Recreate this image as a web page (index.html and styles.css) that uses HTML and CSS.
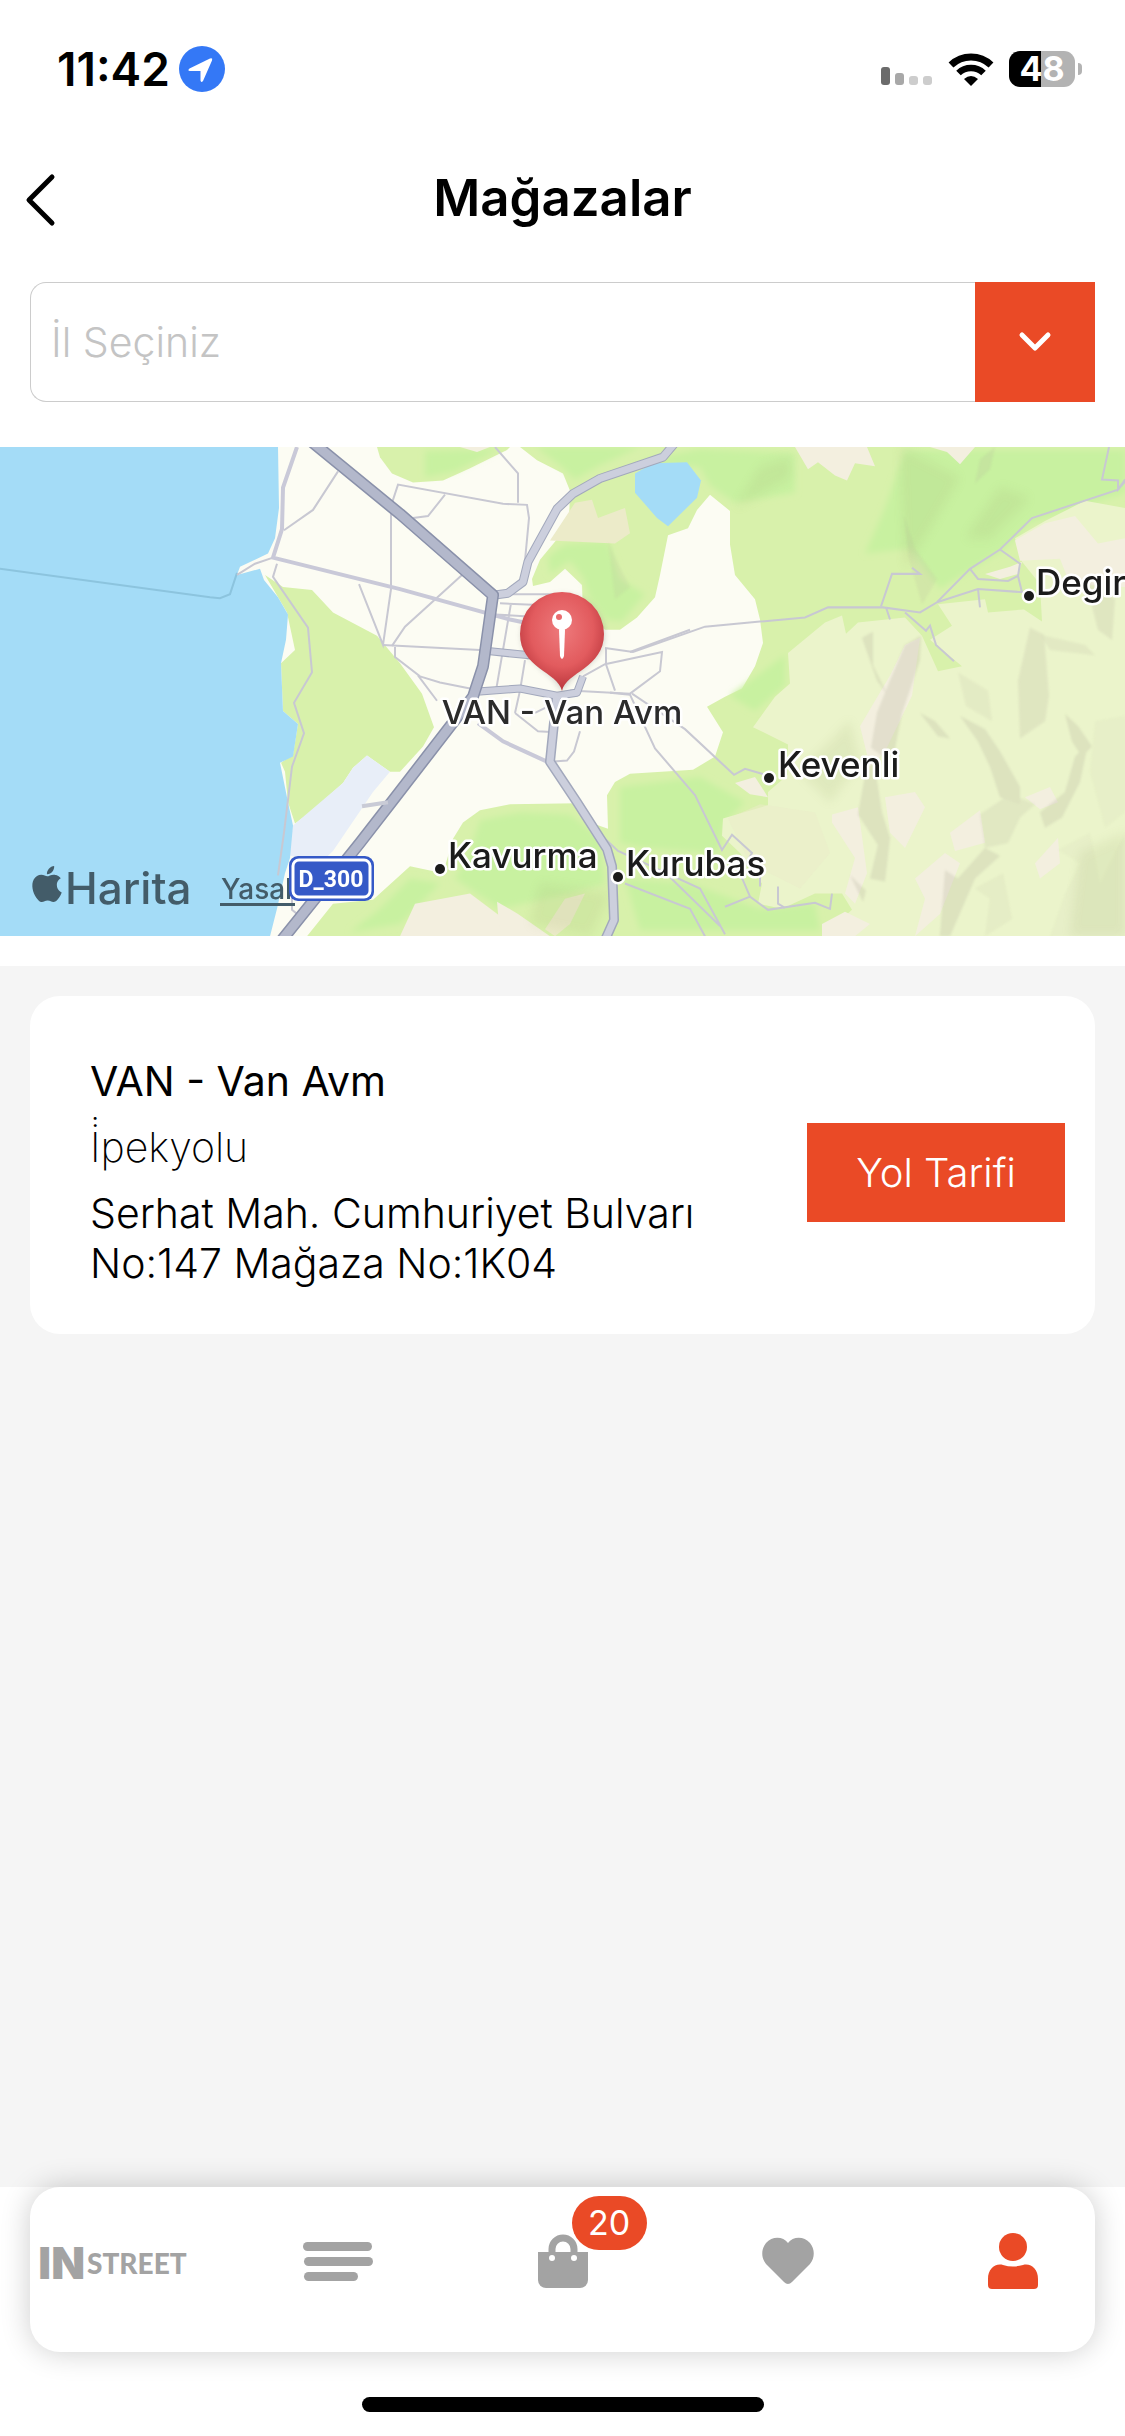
FILE: index.html
```
<!DOCTYPE html>
<html lang="tr">
<head>
    <meta charset="utf-8">
    <meta name="viewport" content="width=device-width, initial-scale=1">
    <title>Mağazalar</title>
    <link rel="stylesheet" href="styles.css">
</head>
<body>
<!-- Status bar -->
<div class="status-bar">
    <div class="status-left">
        <span class="time">11:42</span>
        <svg class="location" width="46" height="46" viewBox="0 0 46 46">
            <circle cx="23" cy="23" r="23" fill="#3478f6"/>
            <path d="M10.500 22.500 31 12.500q3-1 2 2L24 35q-2 2-2.500-.500V25H11q-3-.500-.500-2.500z" fill="#fff"/>
        </svg>
    </div>
    <div class="status-right">
        <svg width="52" height="36" viewBox="0 0 52 36">
            <rect x="0" y="16" width="9" height="18" rx="3" fill="#6b6b6b"/>
            <rect x="14" y="22" width="9" height="12" rx="3" fill="#a8a8a8"/>
            <rect x="28" y="25" width="9" height="9" rx="3" fill="#cdcdcd"/>
            <rect x="42" y="25" width="9" height="9" rx="3" fill="#cdcdcd"/>
        </svg>
        <svg width="46" height="36" viewBox="0 0 46 36">
            <path d="M3 14a29 29 0 0 1 40 0" fill="none" stroke="#000" stroke-width="7"/>
            <path d="M10.500 22a18 18 0 0 1 25 0" fill="none" stroke="#000" stroke-width="6.500"/>
            <path d="M16 28q7-6 14 0l-7 7z"/>
        </svg>
        <div class="battery">48</div>
    </div>
</div>

<header class="header">
    <button class="back" aria-label="Geri">
        <svg width="32" height="54" viewBox="0 0 32 54"><path d="M28 4 5 27l23 23" fill="none" stroke="#000" stroke-width="5" stroke-linecap="round" stroke-linejoin="round"/></svg>
    </button>
    <h1>Mağazalar</h1>
</header>

<form class="city-form">
    <input type="text" class="city-input" placeholder="İl Seçiniz" aria-label="İl Seçiniz">
    <button type="button" class="city-toggle" aria-label="İlleri göster">
        <svg width="36" height="24" viewBox="0 0 36 24"><path d="M5 5l13 13L31 5" fill="none" stroke="#fff" stroke-width="5" stroke-linecap="round" stroke-linejoin="round"/></svg>
    </button>
</form>

<!-- Map -->
<svg class="map" viewBox="0 0 1125 489" preserveAspectRatio="xMidYMid slice">
    <defs>
        <radialGradient id="pinFill" cx="50%" cy="38%" r="62%">
            <stop offset="0" stop-color="#ee7a7c"/>
            <stop offset="0.600" stop-color="#e25b5e"/>
            <stop offset="1" stop-color="#b8333a"/>
        </radialGradient>
        <filter id="soft"><feGaussianBlur stdDeviation="3"/></filter>
        <filter id="shade"><feGaussianBlur stdDeviation="5"/></filter>
        <filter id="relief"><feGaussianBlur stdDeviation="1"/></filter>
    </defs>
    <rect width="1125" height="489" fill="#fcfcf3"/>

    <g transform="scale(1 1.015)">
    <!-- green areas -->
    <g fill="#d8f1ab">
        <path d="M377 0 380 10 392 26 413 35 443 33 470 21 507 3 510 0z"/>
        <path d="M520 0 537 13 563 26 570 43 569 73 557 91 540 111 532 130 533 137 550 133 565 120 582 136 583 163 605 180 620 180 637 168 655 148 660 126 668 87 688 80 697 62 710 47 730 63 730 96 735 126 755 150 760 170 763 193 755 216 742 238 725 246 707 256 723 281 715 305 693 318 630 322 615 330 607 343 608 376 593 371 577 351 510 352 480 358 463 370 453 386 443 420 410 413 373 446 333 450 307 482H1125V0z"/>
        <path d="M265 126 283 138 312 141 333 163 377 186 400 213 422 243 434 276 423 295 400 320 390 320 367 304 353 316 343 331 310 360 295 371 288 350 285 320 281 311 293 303 298 273 283 260 281 213 295 200 287 163z"/>
    </g>
    <g fill="#c8f1a0" filter="url(#soft)">
        <path d="M425 4 500 2 455 24 425 30z"/>
        <path d="M536 0H640L600 18 575 32 560 18z"/>
        <path d="M548 108 565 96 608 92 620 130 645 145 622 172 606 170 590 150 583 128 570 112 550 125z"/>
        <path d="M640 14 700 2 795 6V45L735 55 710 38 700 20z"/>
        <path d="M905 3 1125 3V45L1030 75 1005 100 940 140 910 100 865 105 885 60z"/>
        <path d="M480 368 520 360 570 362 600 385 605 430 570 440 500 455 455 425 470 400z"/>
        <path d="M620 335 700 325 745 350 725 370 718 400 645 395 620 390z"/>
        <path d="M380 455 410 425 440 430 400 470 350 478z"/>
        <path d="M625 425 690 430 760 455 815 450 820 476 640 476z"/>
        <path d="M730 245 785 205 785 235 755 260z"/>
    </g>

    <!-- hills -->
    <path fill="#ebf4cb" d="M825 173 842 166 846 184 858 173 905 168 922 186 938 221 962 216 930 190 952 176 938 155 985 150 988 163 1024 160 1042 172 1040 135 1022 113 1015 90 1045 73 1085 53 1125 60V482H822L852 456 842 440 815 440 782 455 758 450 762 430 740 400 722 383 723 366 768 353 768 340 788 323 788 293 753 276 775 246 790 233 788 203z"/>
    <g fill="#f3efdf">
        <path d="M795 0H867L875 19 855 16 847 33 835 28 818 15 808 22z"/>
        <path d="M930 0H975L960 17 947 5z"/>
        <path d="M460 0H490L477 5z"/>
        <path d="M1015 92 1045 75 1075 68 1098 95 1125 90V138L1070 135 1060 110 1020 112z"/>
        <path d="M985 125 1010 118 1022 113 1018 125 1000 130z"/>
        <path d="M735 331 755 325 768 345 750 342z"/>
        <path d="M415 450 470 440 500 462 515 482H400z"/>
        <path d="M497 448 518 460 550 482H500z"/>
        <path d="M822 470 845 458 870 470 855 482H822z"/>
        <path d="M832 362 858 355 867 420 855 450 845 440 855 405 832 370z"/>
        <path d="M885 345 915 340 925 355 905 395 890 380z"/>
        <path d="M950 380 980 358 985 390 955 398z"/>
        <path d="M1025 345 1050 335 1058 350 1040 357z"/>
        <path d="M1035 410 1058 385 1060 410 1040 425z"/>
        <path d="M915 425 945 400 960 410 940 460 915 482 925 445z"/>
        <path d="M860 275 890 225 905 195 920 188 912 245 885 300 870 315z"/>
    </g>
    <g fill="#ecebc9">
        <path d="M550 92 575 55 592 52 598 70 625 60 630 85 615 95z"/>
        <path d="M545 475 565 445 585 440 570 470 555 482z"/>
        <path d="M728 366 760 352 815 360 830 400 800 435 750 410z" opacity=".5"/>
    </g>

    <!-- relief shading -->
    <g fill="#b5b29c" opacity=".26" filter="url(#relief)">
        <path d="M862 188 873 182 873 215 888 245 877 230z"/>
        <path d="M905 195 921 186 920 210 902 262 892 312 871 296 877 262 890 230z"/>
        <path d="M866 318 874 310 882 360 890 385 885 428 870 425 878 392 858 362z"/>
        <path d="M904 68 915 100 937 130 922 155 909 110z" opacity=".6"/>
        <path d="M975 36 990 22 995 0 980 12z" opacity=".7"/>
        <path d="M1030 178 1044 185 1049 245 1045 270 1020 287 1018 230z" opacity=".8"/>
        <path d="M920 262 935 270 950 287 938 285z"/>
        <path d="M958 222 988 240 992 270 966 255z" opacity=".5"/>
        <path d="M960 265 985 278 1000 300 1020 335 1020 352 1000 345 990 315 978 290z"/>
        <path d="M980 362 1010 342 1035 352 1020 365 1008 390 985 395z" opacity=".7"/>
        <path d="M1040 360 1065 340 1075 305 1088 292 1080 330 1062 365 1045 375z"/>
        <path d="M1065 263 1078 275 1092 295 1082 305 1072 290z"/>
        <path d="M945 417 958 425 985 395 1000 403 975 425 950 482H940z"/>
        <path d="M975 435 1003 420 1012 465 985 482 990 445z" opacity=".4"/>
        <path d="M1085 130 1115 150 1112 190 1098 180z" opacity=".8"/>
        <path d="M1040 185 1085 195 1095 205 1050 200z" opacity=".6"/>
        <path d="M1058 397 1080 410 1065 440 1050 482H1125V380L1100 430 1090 380z" opacity=".25"/>
        <path d="M1095 270 1125 265V360L1105 375 1090 320z" opacity=".25"/>
        <path d="M850 422 866 437 863 448z"/>
        <path d="M608 93 618 115 630 138 615 150z" opacity=".5"/>
    </g>
    <g fill="#9fae70" opacity=".14" filter="url(#shade)">
        <path d="M900 0 960 30 930 80 905 120z"/>
        <path d="M965 90 1000 40 1030 50 990 90z"/>
        <path d="M735 60 790 30 790 10 760 20z"/>
        <path d="M800 320 850 270 860 310 830 350z"/>
        <path d="M1080 400 1125 380V482H1070z"/>
        <path d="M540 430 610 440 590 482 530 470z"/>
    </g>

    <!-- lake and water -->
    <path fill="#e8eef8" d="M367 304 390 320 373 340 333 398 320 410 288 402 293 373 343 331 353 316z"/>
    <path fill="#a4dcf7" d="M0 0H278L279 60 275 90 268 105 240 118 237 126 260 120 264 131 278 148 288 165 286 190 281 213 283 260 298 273 293 305 280 311 288 350 293 373 290 405 285 420 277 455 270 482H0z"/>
    <path fill="#a4dcf7" d="M635 26 653 16 687 15 701 33 697 50 668 78 657 70 635 45z"/>
    <path d="M0 120 210 148 220 149 230 145 237 124" fill="none" stroke="#8cc4de" stroke-width="2"/>

    <!-- small roads -->
    <g fill="none" stroke="#c8c8d2" stroke-width="2">
        <path d="M237 126 255 115 273 109"/>
        <path d="M284 82 313 62 338 24"/>
        <path d="M277 115 273 128 308 178 312 222 294 252 304 282 292 315 284 380 278 422"/>
        <path d="M292 440V456L297 460"/>
        <path d="M359 135 383 195 391 140V58L398 37 503 56 527 57 529 70 525 112"/>
        <path d="M495 0 518 26V55M445 47 428 68 413 70M462 126 405 177 392 196"/>
        <path d="M383 195 480 200M395 197V207L420 226 440 232 480 240M418 225 437 250"/>
        <path d="M500 145 565 145M500 154 545 156M495 165 545 168M511 154 496 240M525 210 520 240 515 262"/>
        <path d="M605 198 633 202 705 177 760 172 805 168 828 158 883 158 920 163 937 153 970 120 1000 101 1032 70 1118 42 1125 32"/>
        <path d="M583 226 605 214 662 202 660 221 630 243 570 240M630 202 690 180M606 198V214L615 240"/>
        <path d="M610 242 630 244 655 297 695 343 722 397 732 382 752 400 745 412"/>
        <path d="M632 243 685 278 734 323 745 317 769 324"/>
        <path d="M550 310 567 309 574 300 580 280M515 262 538 280 555 281M535 262 570 245"/>
        <path d="M604 385 618 398 700 435 725 480M625 430 690 455 705 482M668 422 720 472"/>
        <path d="M725 453 750 443 768 456 815 449 830 455 832 440M750 443 740 420 760 415 760 433M778 433V450L785 454"/>
        <path d="M881 157 892 125H920L912 119M886 158 890 170M905 163 926 181 930 176 936 195 954 211"/>
        <path d="M970 120 978 130 1008 132 1018 127 1022 143 978 140 937 153M1000 101 1020 115 1018 127M978 140 980 158"/>
        <path d="M1109 0 1102 32 1118 33V42L1125 34"/>
    </g>

    <!-- main roads -->
    <g fill="none" stroke="#c9c9d8" stroke-width="4">
        <path d="M297 0 283 40 282 81 273 109 400 140 510 170 540 176"/>
        <path d="M478 272 503 290 547 310"/>
    </g>
    <g fill="none" stroke-linejoin="round">
        <g stroke="#a2a8bc" stroke-width="9">
            <path d="M493 146 508 144 523 133 528 113 557 61 573 46 600 31 663 10 675-4"/>
            <path d="M557 243 550 310 577 350 607 396 612 413 614 466 604 488" stroke-width="10"/>
            <path d="M477 241 520 238 557 245 577 242 583 226M488 201 527 205 545 206" stroke-width="8"/>
        </g>
        <g stroke="#cccfdd" stroke-width="7">
            <path d="M493 146 508 144 523 133 528 113 557 61 573 46 600 31 663 10 675-4"/>
            <path d="M557 243 550 310 577 350 607 396 612 413 614 466 604 488"/>
            <path d="M477 241 520 238 557 245 577 242 583 226M488 201 527 205 545 206" stroke-width="6"/>
        </g>
        <path d="M312-5 400 66 493 146 483 216 473 246 393 348 360 390 280 488" stroke="#8a91aa" stroke-width="12"/>
        <path d="M312-5 400 66 493 146 483 216 473 246 393 348 360 390 280 488" stroke="#b3b8cb" stroke-width="9"/>
        <path d="M362 354 388 350" stroke="#c9cbd6" stroke-width="4"/>
    </g>
    </g>

    <!-- map credits -->
    <g fill="#435c69">
        <path transform="translate(29 419) scale(1.500)" d="M12.152 6.896c-.948 0-2.415-1.078-3.960-1.040-2.040.027-3.910 1.183-4.961 3.014-2.117 3.675-.546 9.103 1.519 12.090 1.013 1.454 2.208 3.090 3.792 3.039 1.520-.065 2.090-.987 3.935-.987 1.831 0 2.350.987 3.960.948 1.637-.026 2.676-1.480 3.676-2.948 1.156-1.688 1.636-3.325 1.662-3.415-.039-.013-3.182-1.221-3.220-4.857-.026-3.040 2.480-4.494 2.597-4.559-1.429-2.090-3.623-2.324-4.390-2.376-2-.156-3.675 1.090-4.610 1.090zM15.530 3.830c.843-1.012 1.400-2.427 1.245-3.830-1.207.052-2.662.805-3.532 1.818-.780.896-1.454 2.338-1.273 3.714 1.338.104 2.715-.688 3.559-1.701"/>
        <text x="65" y="457" class="map-brand">Harita</text>
        <text x="221" y="452" class="map-legal">Yasal</text>
        <rect x="220" y="456" width="75" height="3"/>
    </g>
    <rect x="289" y="409" width="85" height="45" rx="9" fill="#3559c7"/>
    <rect x="293" y="413" width="77" height="37" rx="6" fill="#3559c7" stroke="#fff" stroke-width="3"/>
    <text x="331" y="440" class="road-no" text-anchor="middle">D_300</text>

    <!-- towns -->
    <g class="town">
        <circle cx="440" cy="422" r="5"/><text x="448" y="421">Kavurma</text>
        <circle cx="618" cy="430" r="5"/><text x="626" y="429">Kurubas</text>
        <circle cx="769" cy="331" r="5"/><text x="778" y="330">Kevenli</text>
        <circle cx="1029" cy="149" r="5"/><text x="1036" y="148">Degir</text>
    </g>

    <!-- store pin -->
    <g transform="translate(0 3)">
        <path d="M562 243C558 222 522 214 522 186a40 40 0 0 1 82 0C604 214 568 222 562 243z" fill="#6b6b6b" opacity=".35" filter="url(#soft)"/>
        <path d="M562 241C558 222 520 218 520 184a42 42 0 0 1 84 0C604 218 566 222 562 241z" fill="url(#pinFill)"/>
        <path d="M560 176h4l1 4-1 26q-2 6-4 0l-1-26z" fill="#fff"/>
        <circle cx="562" cy="170" r="10" fill="#fff"/>
        <circle cx="559" cy="167" r="3" fill="#e96a6d"/>
    </g>
    <text x="562" y="277" class="pin-label" text-anchor="middle">VAN - Van Avm</text>
</svg>

<main class="stores">
    <article class="store-card">
        <div class="store-info">
            <h2>VAN - Van Avm</h2>
            <p class="district">İ&#x307;pekyolu</p>
            <p class="address">Serhat Mah. Cumhuriyet Bulvarı No:147 Mağaza No:1K04</p>
        </div>
        <button class="directions">Yol Tarifi</button>
    </article>
</main>

<footer class="footer">
    <div class="tab-bar">
        <nav class="tabs">
            <a href="#" class="tab logo"><span class="logo-in">IN</span><span class="logo-street">STREET</span></a>
            <a href="#" class="tab" aria-label="Kategoriler">
                <svg width="70" height="56" viewBox="0 0 70 56">
                    <rect x="0" y="9" width="69" height="9" rx="4.500"/>
                    <rect x="1" y="24" width="69" height="9" rx="4.500"/>
                    <rect x="1" y="39" width="54" height="9" rx="4.500"/>
                </svg>
            </a>
            <a href="#" class="tab" aria-label="Sepet">
                <svg width="50" height="56" viewBox="0 0 50 56">
                    <path d="M0 19H50V47a8 8 0 0 1-8 8H8a8 8 0 0 1-8-8z"/>
                    <path d="M14 24V16a11 11 0 0 1 22 0v8" fill="none" stroke="#a3a3a3" stroke-width="7"/>
                    <circle cx="14" cy="25" r="3" fill="#fff"/>
                    <circle cx="36" cy="25" r="3" fill="#fff"/>
                </svg>
                <span class="badge">20</span>
            </a>
            <a href="#" class="tab" aria-label="Favoriler">
                <svg width="52" height="56" viewBox="0 0 52 56"><path d="M26 10C31 3 42 3 48 10c5 6 5 15 0 21L30 49q-4 4-8 0L4 31C-1 25-1 16 4 10 10 3 21 3 26 10z"/></svg>
            </a>
            <a href="#" class="tab active" aria-label="Hesabım">
                <svg width="50" height="56" viewBox="0 0 50 56">
                    <circle cx="25" cy="14" r="14"/>
                    <path d="M0 46C0 36 7 30 15 32q10 3 20 0c8-2 15 4 15 14v6q0 4-4 4H4q-4 0-4-4z"/>
                </svg>
            </a>
        </nav>
    </div>
    <div class="home-indicator"></div>
</footer>
</body>
</html>
```
FILE: styles.css
```
* {
    box-sizing: border-box;
}
body {
    margin: 0;
    min-height: 100vh;
    display: flex;
    flex-direction: column;
    background: #fff;
    color: #000;
    font-family: Inter, "Liberation Sans", sans-serif;
}
h1, h2, p {
    margin: 0;
}
button {
    border: 0;
    padding: 0;
    font-family: inherit;
    cursor: pointer;
}
svg {
    display: block;
}
.status-bar {
    display: flex;
    justify-content: space-between;
    align-items: center;
    height: 138px;
    padding: 0 43px 0 57px;
}
.status-left {
    display: flex;
    align-items: center;
    gap: 9px;
}
.status-right {
    display: flex;
    align-items: center;
    gap: 15px;
}
.time {
    font-size: 46px;
    font-weight: 600;
}
.battery {
    position: relative;
    width: 66px;
    height: 36px;
    margin-right: 7px;
    border-radius: 11px;
    background: linear-gradient(to right, #000 48%, #b3b3b3 48%);
    color: #fff;
    font-size: 34px;
    font-weight: 700;
    line-height: 36px;
    text-align: center;
}
.battery::after {
    content: "";
    position: absolute;
    right: -7px;
    top: 12px;
    width: 4px;
    height: 12px;
    border-radius: 0 4px 4px 0;
    background: #b3b3b3;
}
.header {
    display: grid;
    grid-template-columns: 80px 1fr 80px;
    align-items: center;
    height: 124px;
    margin-bottom: 20px;
}
.header h1 {
    padding-bottom: 6px;
    font-size: 51px;
    font-weight: 600;
    text-align: center;
}
.back {
    justify-self: start;
    margin-left: 24px;
    background: none;
}
.city-form {
    display: flex;
    height: 120px;
    margin: 0 30px 45px;
}
.city-input {
    flex: 1;
    min-width: 0;
    padding: 0 20px;
    border: 1px solid #ccc;
    border-right: 0;
    border-radius: 16px 0 0 16px;
    font-family: inherit;
    font-size: 41px;
    font-weight: 300;
}
.city-input::placeholder {
    color: #c4c4c4;
    opacity: 1;
}
.city-toggle {
    display: flex;
    align-items: center;
    justify-content: center;
    width: 120px;
    background: #ea4a26;
}

/* Map */
.map {
    width: 100%;
    height: 489px;
    flex-shrink: 0;
}
.map-brand {
    font-size: 44px;
    font-weight: 500;
}
.map-legal {
    font-size: 28px;
    font-weight: 500;
}
.road-no {
    fill: #fff;
    font-family: Roboto, sans-serif;
    font-size: 23px;
    font-weight: 700;
}
.town, .pin-label {
    fill: #1b1b1b;
    stroke: #fff;
    stroke-width: 5px;
    stroke-linejoin: round;
    paint-order: stroke;
    font-size: 35px;
    font-weight: 500;
}
.pin-label {
    fill: #2b2b2b;
    font-size: 33px;
}

/* Store list */
.stores {
    flex: 1;
    margin-top: 30px;
    padding: 30px;
    background: #f5f5f5;
}
.store-card {
    display: flex;
    align-items: center;
    justify-content: space-between;
    gap: 30px;
    padding: 60px 30px 46px 60px;
    border-radius: 30px;
    background: #fff;
}
.store-info {
    flex: 1;
    max-width: 640px;
}
.store-card h2, .store-card p {
    font-size: 41px;
    line-height: 50px;
}
.store-card h2 {
    margin-bottom: 16px;
    font-weight: 400;
}
.store-card .district {
    margin-bottom: 16px;
    font-weight: 200;
}
.store-card .address {
    font-weight: 300;
}
.directions {
    width: 258px;
    height: 99px;
    background: #ea4a26;
    color: #fff;
    font-size: 40px;
    font-weight: 300;
}

/* Bottom bar */
.footer {
    height: 249px;
}
.tab-bar {
    position: relative;
    height: 165px;
    margin: 0 30px;
    border-radius: 30px;
    background: #fff;
    box-shadow: 0 0 30px rgba(0, 0, 0, 0.2);
}
.tabs {
    display: grid;
    grid-template-columns: repeat(5, 1fr);
    height: 100%;
    margin: 0 -30px;
}
.tab {
    position: relative;
    display: flex;
    justify-content: center;
    align-items: flex-start;
    padding-top: 46px;
    text-decoration: none;
    color: #a3a3a3;
    fill: #a3a3a3;
}
.tab.active {
    fill: #ea4a26;
}
.logo {
    align-items: center;
    gap: 2px;
    padding: 0 0 14px;
    font-weight: 900;
}
.logo-in {
    font-size: 44px;
}
.logo-street {
    font-family: Lato, sans-serif;
    font-size: 28px;
}
.badge {
    position: absolute;
    left: calc(50% + 9px);
    top: 9px;
    width: 75px;
    height: 54px;
    border-radius: 27px;
    background: #ea4a26;
    color: #fff;
    font-size: 34px;
    line-height: 54px;
    text-align: center;
}
.home-indicator {
    width: 402px;
    height: 15px;
    margin: 45px auto 0;
    border-radius: 8px;
    background: #000;
}
```
